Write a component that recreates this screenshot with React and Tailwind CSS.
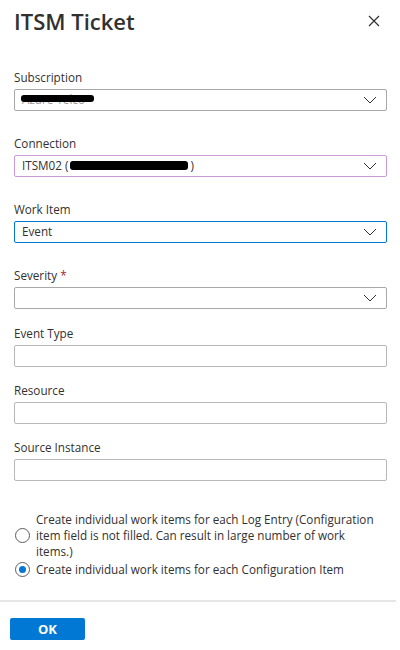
import React from "react";

const Chevron = () => (
  <svg width="14" height="8" viewBox="0 0 14 8" className="shrink-0">
    <path d="M1 1 L7 7 L13 1" fill="none" stroke="#323130" strokeWidth="1" />
  </svg>
);

function Label({ children, required }) {
  return (
    <div className="h-[16px] leading-[16px] text-[11.7px] text-[#323130] mb-[4px]">
      {children}
      {required && <span className="text-[#a4262c] ml-[3px]">*</span>}
    </div>
  );
}

function SelectBox({ border = "border-[#a8a8a8]", children }) {
  return (
    <div className={`h-[22px] border ${border} rounded-[2px] flex items-center pl-[7px] pr-[9px] bg-white`}>
      <div className="flex-1 flex items-center text-[11.7px] text-[#323130] min-w-0">{children}</div>
      <Chevron />
    </div>
  );
}

function TextBox() {
  return <div className="h-[22px] border border-[#b8b8b8] rounded-[2px] bg-white" />;
}

export default function App() {
  return (
    <div
      className="w-[400px] h-[650px] bg-white flex flex-col"
      style={{ fontFamily: '"Open Sans", "Noto Sans", sans-serif' }}
    >
      <div className="flex items-center justify-between pl-[14px] pr-[20px] pt-[5px] h-[36px]">
        <div className="text-[22px] font-semibold text-[#323130] leading-[28px]">ITSM Ticket</div>
        <svg width="12" height="12" viewBox="0 0 12 12">
          <path d="M1 1 L11 11 M11 1 L1 11" stroke="#323130" strokeWidth="1.2" />
        </svg>
      </div>

      <div className="px-[14px] pr-[13px] flex flex-col mt-[33px]">
        <div className="flex flex-col">
          <Label>Subscription</Label>
          <SelectBox>
            <div className="relative">
              <span className="text-[#9a9a9a]">Azure Telco</span>
              <div className="absolute left-[-1px] top-[4px] w-[73px] h-[7px] bg-black rounded-[3px]" />
            </div>
          </SelectBox>
        </div>

        <div className="flex flex-col mt-[24px]">
          <Label>Connection</Label>
          <SelectBox border="border-[#c99ad8]">
            <span>ITSM02 (</span>
            <span className="inline-block w-[118px] h-[9px] bg-black rounded-[3px] mx-[2px]" />
            <span>)</span>
          </SelectBox>
        </div>

        <div className="flex flex-col mt-[24px]">
          <Label>Work Item</Label>
          <SelectBox border="border-[#0078d4]">
            <span>Event</span>
          </SelectBox>
        </div>

        <div className="flex flex-col mt-[24px]">
          <Label required>Severity</Label>
          <SelectBox />
        </div>

        <div className="flex flex-col mt-[16px]">
          <Label>Event Type</Label>
          <TextBox />
        </div>

        <div className="flex flex-col mt-[15px]">
          <Label>Resource</Label>
          <TextBox />
        </div>

        <div className="flex flex-col mt-[15px]">
          <Label>Source Instance</Label>
          <TextBox />
        </div>

        <div className="flex flex-col mt-[30px] gap-[2px] text-[11.7px] text-[#323130] leading-[16px]">
          <div className="flex items-center">
            <div className="w-[15px] h-[15px] rounded-full border border-[#605e5c] shrink-0 ml-[1px] mr-[6px]" />
            <div className="w-[342px]">
              Create individual work items for each Log Entry (Configuration item field is not filled. Can result in large number of work items.)
            </div>
          </div>
          <div className="flex items-center">
            <div className="w-[15px] h-[15px] rounded-full border border-[#605e5c] shrink-0 ml-[1px] mr-[6px] flex items-center justify-center">
              <div className="w-[7px] h-[7px] rounded-full bg-[#0078d4]" />
            </div>
            <div>Create individual work items for each Configuration Item</div>
          </div>
        </div>
      </div>

      <div className="mt-[23px] h-[2px] bg-[#e5e5e5] mr-[4px]" />

      <div className="pl-[10px] pt-[14px]">
        <button className="w-[75px] h-[22px] bg-[#0078d4] text-white text-[13px] font-bold rounded-[2px] leading-[22px]">
          OK
        </button>
      </div>
    </div>
  );
}
